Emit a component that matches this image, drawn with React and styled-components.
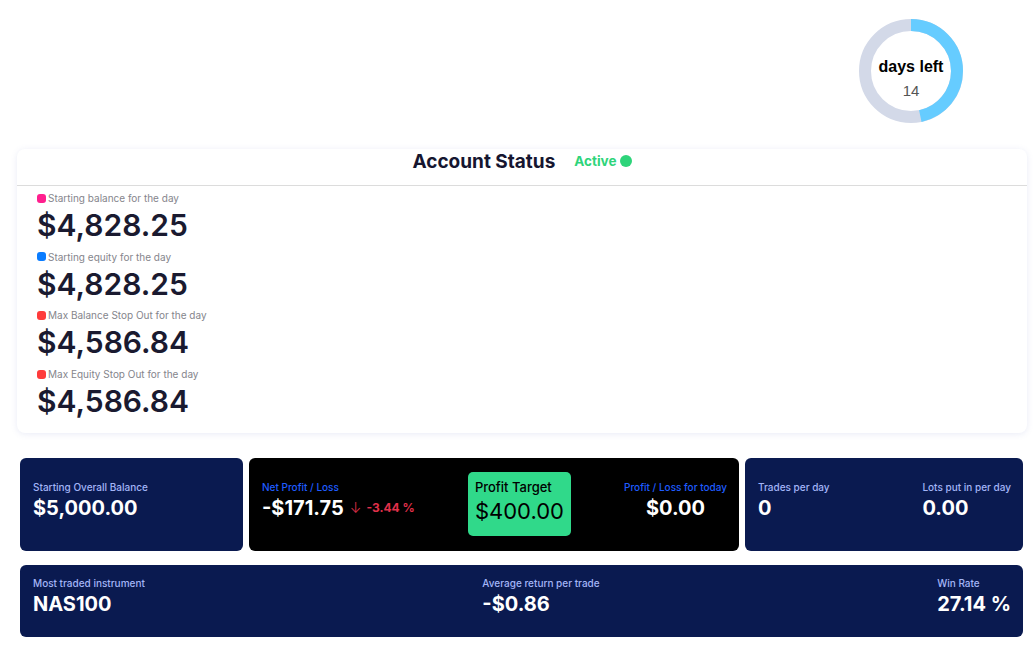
import React from 'react';
import styled, { createGlobalStyle } from 'styled-components';

const GlobalStyle = createGlobalStyle`
  body {
    margin: 0;
    background: #ffffff;
    font-family: Inter, "Open Sans", sans-serif;
  }
`;

const Page = styled.div`
  padding: 19px 0 20px;
`;

const TopRow = styled.div`
  display: flex;
  justify-content: flex-end;
  padding-right: 73px;
`;

const Donut = styled.div`
  position: relative;
  width: 104px;
  height: 104px;
`;

const DonutText = styled.div`
  position: absolute;
  inset: 0;
  display: flex;
  flex-direction: column;
  align-items: center;
  justify-content: center;
  font-family: "Liberation Sans", Arial, sans-serif;
  padding-top: 14px;
`;

const DaysLabel = styled.div`
  font-size: 16px;
  font-weight: 700;
  color: #000;
  line-height: 20px;
`;

const DaysCount = styled.div`
  font-size: 15px;
  color: #555;
  line-height: 18px;
  margin-top: 5px;
`;

const StatusCard = styled.div`
  margin: 26px 9px 0 17px;
  background: #fff;
  border-radius: 8px;
  box-shadow: 0 1px 6px rgba(120, 130, 200, 0.16);
`;

const StatusHeader = styled.div`
  display: flex;
  justify-content: center;
  align-items: center;
  gap: 19px;
  height: 24px;
  padding: 0 0 12px;
  border-bottom: 1px solid #dcdcdc;
`;

const Title = styled.div`
  font-size: 19px;
  font-weight: 700;
  color: #161630;
`;

const ActiveBadge = styled.div`
  display: flex;
  align-items: center;
  gap: 3px;
  font-size: 13.5px;
  font-weight: 700;
  color: #2ed47a;
`;

const GreenDot = styled.span`
  width: 12px;
  height: 12px;
  border-radius: 50%;
  background: #2ed47a;
`;

const StatusBody = styled.div`
  padding: 5px 20px 7px;
`;

const Stat = styled.div`
  margin-bottom: 4.7px;
`;

const StatLabel = styled.div`
  display: flex;
  align-items: center;
  gap: 2px;
  font-size: 10px;
  line-height: 14px;
  color: #85858c;
`;

const Dot = styled.span`
  width: 9px;
  height: 9px;
  border-radius: 3px;
  background: ${p => p.color};
`;

const StatValue = styled.div`
  font-size: 30px;
  font-weight: 600;
  line-height: 40px;
  color: #1a1a30;
`;

const Cards = styled.div`
  display: grid;
  grid-template-columns: 223fr 490fr 278fr;
  gap: 6px;
  margin: 25px 13px 0 20px;
`;

const Card = styled.div`
  display: flex;
  justify-content: space-between;
  align-items: center;
  height: 93px;
  padding: 0 12px 0 13px;
  box-sizing: border-box;
  border-radius: 6px;
  background: ${p => (p.dark ? '#000000' : '#0a1a50')};
`;

const WideCard = styled(Card)`
  align-items: flex-start;
  height: 72px;
  margin: 14px 13px 0 20px;
  padding-top: 11px;
`;

const Metric = styled.div`
  display: flex;
  flex-direction: column;
  align-items: ${p => (p.center ? 'center' : 'flex-start')};
  padding-bottom: ${p => (p.wide ? 0 : 6)}px;
`;

const MetricLabel = styled.div`
  font-size: 10px;
  font-weight: 500;
  line-height: 14px;
  color: ${p => (p.dark ? '#1f5cff' : '#a3b5f7')};
`;

const MetricValue = styled.div`
  display: flex;
  align-items: center;
  font-size: 20px;
  font-weight: 700;
  line-height: 28px;
  color: #ffffff;
`;

const Arrow = styled.span`
  margin-left: 6px;
  font-size: 14px;
  font-weight: 300;
  color: #e0304a;
`;

const Change = styled.span`
  margin-left: 5px;
  font-size: 12px;
  font-weight: 700;
  color: #e0304a;
`;

const TargetBox = styled.div`
  width: 103px;
  height: 64px;
  box-sizing: border-box;
  padding: 6px 6px 6px 7px;
  border-radius: 5px;
  background: #30d98a;
  color: #000;
`;

const TargetLabel = styled.div`
  font-size: 13px;
  font-weight: 500;
  line-height: 18px;
`;

const TargetValue = styled.div`
  font-size: 22px;
  font-weight: 400;
  line-height: 30px;
`;

function DaysLeft({ days, total }) {
  const r = 46;
  const c = 2 * Math.PI * r;
  const part = (days / total) * c;
  return (
    <Donut>
      <svg width="104" height="104" viewBox="0 0 104 104">
        <circle cx="52" cy="52" r={r} fill="none" stroke="#d3d9e8" strokeWidth="12" />
        <circle
          cx="52"
          cy="52"
          r={r}
          fill="none"
          stroke="#66ccff"
          strokeWidth="12"
          strokeDasharray={`${part} ${c}`}
          transform="rotate(-90 52 52)"
        />
      </svg>
      <DonutText>
        <DaysLabel>days left</DaysLabel>
        <DaysCount>{days}</DaysCount>
      </DonutText>
    </Donut>
  );
}

const stats = [
  { label: 'Starting balance for the day', value: '$4,828.25', color: '#ff1f8e' },
  { label: 'Starting equity for the day', value: '$4,828.25', color: '#0a7cff' },
  { label: 'Max Balance Stop Out for the day', value: '$4,586.84', color: '#ff3b3b' },
  { label: 'Max Equity Stop Out for the day', value: '$4,586.84', color: '#ff3b3b' },
];

export default function App() {
  return (
    <Page>
      <GlobalStyle />
      <TopRow>
        <DaysLeft days={14} total={30} />
      </TopRow>

      <StatusCard>
        <StatusHeader>
          <Title>Account Status</Title>
          <ActiveBadge>
            Active <GreenDot />
          </ActiveBadge>
        </StatusHeader>
        <StatusBody>
          {stats.map(s => (
            <Stat key={s.label}>
              <StatLabel>
                <Dot color={s.color} />
                {s.label}
              </StatLabel>
              <StatValue>{s.value}</StatValue>
            </Stat>
          ))}
        </StatusBody>
      </StatusCard>

      <Cards>
        <Card>
          <Metric>
            <MetricLabel>Starting Overall Balance</MetricLabel>
            <MetricValue>$5,000.00</MetricValue>
          </Metric>
        </Card>
        <Card dark>
          <Metric>
            <MetricLabel dark>Net Profit / Loss</MetricLabel>
            <MetricValue>
              -$171.75
              <Arrow>↓</Arrow>
              <Change>-3.44 %</Change>
            </MetricValue>
          </Metric>
          <TargetBox>
            <TargetLabel>Profit Target</TargetLabel>
            <TargetValue>$400.00</TargetValue>
          </TargetBox>
          <Metric center>
            <MetricLabel dark>Profit / Loss for today</MetricLabel>
            <MetricValue>$0.00</MetricValue>
          </Metric>
        </Card>
        <Card>
          <Metric>
            <MetricLabel>Trades per day</MetricLabel>
            <MetricValue>0</MetricValue>
          </Metric>
          <Metric>
            <MetricLabel>Lots put in per day</MetricLabel>
            <MetricValue>0.00</MetricValue>
          </Metric>
        </Card>
      </Cards>

      <WideCard>
        <Metric wide>
          <MetricLabel>Most traded instrument</MetricLabel>
          <MetricValue>NAS100</MetricValue>
        </Metric>
        <Metric wide>
          <MetricLabel>Average return per trade</MetricLabel>
          <MetricValue>-$0.86</MetricValue>
        </Metric>
        <Metric wide>
          <MetricLabel>Win Rate</MetricLabel>
          <MetricValue>27.14 %</MetricValue>
        </Metric>
      </WideCard>
    </Page>
  );
}
